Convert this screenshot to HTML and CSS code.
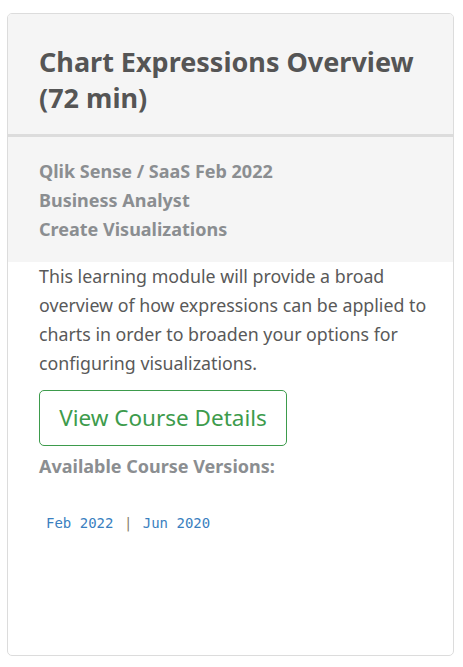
FILE: index.html
```html
<!DOCTYPE html>
<html lang="en">
<head>
    <meta charset="UTF-8">
    <meta name="viewport" content="width=device-width, initial-scale=1.0">
    <title>Chart Expressions Overview</title>
    <link rel="stylesheet" href="styles.css">
</head>
<body>
    <div class="course-card">
        <div class="card-header">
            <h2 class="card-title">Chart Expressions Overview (72 min)</h2>
        </div>

        <!-- product / role / topic -->
        <div class="card-meta">
            <p>Qlik Sense / SaaS Feb 2022</p>
            <p>Business Analyst</p>
            <p>Create Visualizations</p>
        </div>

        <div class="card-body">
            <p class="description">This learning module will provide a broad overview of how expressions can be applied to charts in order to broaden your options for configuring visualizations.</p>
            <a href="#" class="details-btn">View Course Details</a>
            <p class="versions-label">Available Course Versions:</p>
            <div class="versions">
                <a href="#">Feb 2022</a>
                <span class="sep">|</span>
                <a href="#">Jun 2020</a>
            </div>
        </div>
    </div>
</body>
</html>
```

FILE: styles.css
```css
body {
    margin: 0;
    background: #fff;
    font-family: "Noto Sans", "Liberation Sans", sans-serif;
}

.course-card {
    margin: 13px 0 0 7px;
    width: 445px;
    height: 641px;
    border: 1px solid #dcdcdc;
    border-radius: 5px;
    overflow: hidden;
    background: #fff;
}

/* Header */
.card-header {
    background: #f5f5f5;
    padding: 30px 31px 18px 31px;
    border-bottom: 3px solid #dcdcdc;
}

.card-title {
    margin: 0;
    font-size: 27px;
    line-height: 36px;
    font-weight: bold;
    color: #555;
}

/* Meta lines */
.card-meta {
    background: #f5f5f5;
    padding: 20px 31px 18px 31px;
}

.card-meta p {
    margin: 0;
    font-size: 18px;
    line-height: 29px;
    font-weight: bold;
    color: #8b8e91;
}

/* Body */
.card-body {
    padding: 0 10px 0 31px;
}

.description {
    margin: 0;
    font-size: 17.8px;
    line-height: 29px;
    color: #595959;
}

.details-btn {
    display: inline-block;
    margin-top: 12px;
    width: 246px;
    height: 54px;
    line-height: 54px;
    text-align: center;
    border: 1px solid #3d9b4c;
    border-radius: 5px;
    color: #3d9b4c;
    font-size: 22.5px;
    text-decoration: none;
}

.versions-label {
    margin: 6px 0 0 0;
    font-size: 18px;
    line-height: 29px;
    font-weight: bold;
    color: #8b8e91;
}

.versions {
    margin-top: 32px;
    padding-left: 7px;
    font-family: "DejaVu Sans Mono", "Liberation Mono", monospace;
    font-size: 14px;
    line-height: 20px;
}

.versions a {
    color: #3a7fc0;
    text-decoration: none;
}

.versions .sep {
    color: #8a7f70;
    margin: 0 2px;
}
```
